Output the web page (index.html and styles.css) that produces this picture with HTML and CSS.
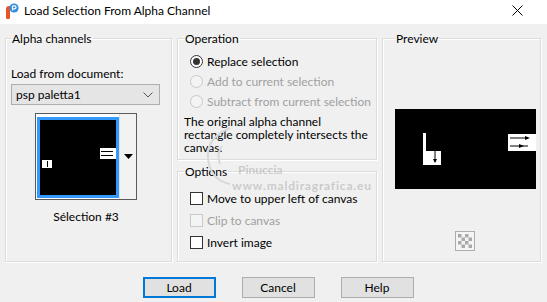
FILE: index.html
```html
<!DOCTYPE html>
<html>

<head>
  <link rel="stylesheet" href="styles.css">
</head>

<body>

  <div class="titlebar">
    <svg class="app-icon" width="14" height="16" viewBox="0 0 14 16">
      <path d="M1 6 Q1 3 4 3 L5 3 L5 15 Q5 16 4 16 L2 16 Q1 16 1 15 Z" fill="#e8542a"/>
      <circle cx="9" cy="5" r="4.6" fill="#2f8fde"/>
      <path d="M7.5 2.8 L7.5 7.6 M7.5 2.8 L9.6 2.8 Q11 2.8 11 4.3 Q11 5.8 9.6 5.8 L7.5 5.8" stroke="#fff" stroke-width="1.2" fill="none"/>
    </svg>
    <span class="title">Load Selection From Alpha Channel</span>
    <svg class="close-icon" width="11" height="11" viewBox="0 0 11 11">
      <path d="M0.5 0.5 L10.5 10.5 M10.5 0.5 L0.5 10.5" stroke="#000" stroke-width="1"/>
    </svg>
  </div>

  <div class="dialog">
    <div class="groups">

      <fieldset class="group alpha">
        <legend>Alpha channels</legend>
        <div class="field-label">Load from document:</div>
        <div class="combo">
          <span>psp paletta1</span>
          <svg width="10" height="6" viewBox="0 0 10 6">
            <path d="M0.5 0.5 L5 5 L9.5 0.5" stroke="#555" stroke-width="1" fill="none"/>
          </svg>
        </div>
        <div class="thumb-picker">
          <div class="thumb">
            <svg width="76" height="75" viewBox="0 0 76 75">
              <rect width="76" height="75" fill="#000"/>
              <rect x="2" y="40" width="10" height="8" fill="#fff"/>
              <rect x="7" y="41" width="1" height="6" fill="#000"/>
              <rect x="60" y="28" width="16" height="11" fill="#fff"/>
              <rect x="61" y="31" width="12" height="1" fill="#000"/>
              <rect x="61" y="35" width="12" height="1" fill="#000"/>
            </svg>
          </div>
          <div class="thumb-drop">
            <svg width="9" height="5" viewBox="0 0 9 5">
              <path d="M0 0 L9 0 L4.5 5 Z" fill="#000"/>
            </svg>
          </div>
        </div>
        <div class="thumb-name">Sélection #3</div>
      </fieldset>

      <div class="middle">
        <fieldset class="group operation">
          <legend>Operation</legend>
          <div class="choice">
            <span class="radio checked"></span>
            <span>Replace selection</span>
          </div>
          <div class="choice disabled">
            <span class="radio"></span>
            <span>Add to current selection</span>
          </div>
          <div class="choice disabled">
            <span class="radio"></span>
            <span>Subtract from current selection</span>
          </div>
          <p class="note">The original alpha channel<br>rectangle completely intersects the<br>canvas.</p>
        </fieldset>

        <fieldset class="group options">
          <legend>Options</legend>
          <div class="choice check-row">
            <span class="checkbox"></span>
            <span>Move to upper left of canvas</span>
          </div>
          <div class="choice check-row disabled">
            <span class="checkbox"></span>
            <span>Clip to canvas</span>
          </div>
          <div class="choice check-row">
            <span class="checkbox"></span>
            <span>Invert image</span>
          </div>
        </fieldset>
      </div>

      <fieldset class="group preview">
        <legend>Preview</legend>
        <svg class="preview-image" width="141" height="80" viewBox="0 0 141 80">
          <rect width="141" height="80" fill="#000"/>
          <rect x="28" y="24" width="3" height="32" fill="#fff"/>
          <rect x="28" y="42" width="18" height="14" fill="#fff"/>
          <path d="M40 42 L40 53" stroke="#000" stroke-width="1"/>
          <path d="M38 50 L40 54 L42 50 Z" fill="#000"/>
          <rect x="113" y="25" width="28" height="17" fill="#fff"/>
          <path d="M115 29 L133 29 M115 37 L133 37" stroke="#000" stroke-width="1"/>
          <path d="M130 27 L135 29 L130 31 Z M124 35 L129 37 L124 39 Z" fill="#000"/>
        </svg>
        <svg class="checker" width="20" height="20" viewBox="0 0 20 20">
          <rect x="0.5" y="0.5" width="19" height="19" fill="#f4f4f4" stroke="#adadad"/>
          <g fill="#a9a9a9">
            <rect x="3" y="3" width="3.5" height="3.5"/>
            <rect x="10" y="3" width="3.5" height="3.5"/>
            <rect x="6.5" y="6.5" width="3.5" height="3.5"/>
            <rect x="13.5" y="6.5" width="3.5" height="3.5"/>
            <rect x="3" y="10" width="3.5" height="3.5"/>
            <rect x="10" y="10" width="3.5" height="3.5"/>
            <rect x="6.5" y="13.5" width="3.5" height="3.5"/>
            <rect x="13.5" y="13.5" width="3.5" height="3.5"/>
          </g>
        </svg>
      </fieldset>

    </div>

    <div class="buttons">
      <button class="btn default">Load</button>
      <button class="btn">Cancel</button>
      <button class="btn">Help</button>
    </div>

    <!-- watermark printed over the screenshot -->
    <svg class="wm-ring" width="40" height="64" viewBox="0 0 40 64">
      <path d="M30 4 Q6 14 8 34 Q10 56 30 60" stroke="#d8d8d8" stroke-width="2" fill="none"/>
      <path d="M22 22 Q16 30 20 40" stroke="#d8d8d8" stroke-width="2" fill="none"/>
    </svg>
    <span class="wm-name">Pinuccia</span>
    <span class="wm-site">www.maldiragrafica.eu</span>
  </div>

</body>

</html>
```

FILE: styles.css
```css
* {
  box-sizing: border-box;
}

body {
  margin: 0;
  width: 547px;
  height: 302px;
  overflow: hidden;
  background-color: #f0f0f0;
  font-family: Lato, "Noto Sans", sans-serif;
  font-size: 12px;
  color: #000;
}

.titlebar {
  display: flex;
  align-items: center;
  height: 24px;
  padding: 0 0 4px 5px;
  background-color: #fff;
}

.app-icon {
  margin-top: 2px;
}

.title {
  margin-left: 5px;
  flex: 1;
}

.close-icon {
  margin-right: 24px;
  margin-top: 1px;
}

.dialog {
  position: relative;
  padding: 7px 0 0 5px;
}

.groups {
  display: grid;
  grid-template-columns: 167px 200px 159px;
  column-gap: 5px;
  height: 231px;
}

.group {
  margin: 0;
  min-width: 0;
  border: 1px solid #dcdcdc;
  box-shadow: inset 1px 1px 0 #fff, 1px 1px 0 #fff;
  padding: 0 5px;
}

.group legend {
  margin-left: 0;
  padding: 0 1px;
  line-height: 15px;
}

/* Alpha channels */
.field-label {
  margin-top: 20px;
  line-height: 15px;
}

.combo {
  display: flex;
  align-items: center;
  justify-content: space-between;
  width: 149px;
  height: 21px;
  margin-top: 3px;
  padding: 0 6px 0 4px;
  background-color: #e5e5e5;
  border: 1px solid #adadad;
}

.thumb-picker {
  display: flex;
  width: 102px;
  height: 87px;
  margin: 8px 0 0 24px;
  padding: 3px 0 1px 1px;
  border: 1px solid #5a5a5a;
  background-color: #fff;
}

.thumb {
  width: 82px;
  height: 81px;
  border: 3px solid #3399ff;
  line-height: 0;
}

.thumb-drop {
  flex: 1;
  display: flex;
  align-items: center;
  justify-content: center;
  margin-top: -3px;
  margin-bottom: -1px;
  background-color: #f2f2f2;
  border-left: 1px solid #e0e0e0;
}

.thumb-name {
  width: 102px;
  margin: 9px 0 0 24px;
  text-align: center;
  line-height: 15px;
}

/* Operation / Options */
.middle {
  display: flex;
  flex-direction: column;
  gap: 4px;
}

.operation {
  height: 129px;
  padding: 5px 6px 0 6px;
}

.options {
  flex: 1;
  padding: 8px 6px 0 6px;
}

.choice {
  display: flex;
  align-items: center;
  height: 20px;
  padding-left: 6px;
  gap: 4px;
  white-space: nowrap;
}

.check-row {
  height: 22px;
}

.disabled {
  color: #a0a0a0;
}

.radio {
  flex-shrink: 0;
  width: 13px;
  height: 13px;
  border-radius: 50%;
  border: 1px solid #333;
  background-color: #fff;
  display: flex;
  align-items: center;
  justify-content: center;
}

.radio.checked::after {
  content: "";
  width: 7px;
  height: 7px;
  border-radius: 50%;
  background-color: #333;
}

.disabled .radio {
  border-color: #c8c8c8;
  background-color: #f4f4f4;
}

.checkbox {
  flex-shrink: 0;
  width: 13px;
  height: 13px;
  border: 1px solid #333;
  background-color: #fff;
}

.disabled .checkbox {
  border-color: #c8c8c8;
  background-color: #f4f4f4;
}

.note {
  margin: 4px 0 0 0;
  line-height: 13px;
  white-space: nowrap;
}

/* Preview */
.preview {
  padding: 0 0 0 12px;
}

.preview-image {
  display: block;
  margin-top: 63px;
}

.checker {
  display: block;
  margin: 42px 0 0 60px;
}

/* Buttons */
.buttons {
  display: flex;
  justify-content: center;
  gap: 26px;
  margin-top: 15px;
  padding-left: 4px;
}

.btn {
  width: 73px;
  height: 21px;
  padding: 0;
  font-family: inherit;
  font-size: 12px;
  color: #000;
  background-color: #e1e1e1;
  border: 1px solid #adadad;
}

.btn.default {
  border: 2px solid #0078d7;
}

/* Watermark */
.wm-ring {
  position: absolute;
  left: 200px;
  top: 100px;
  pointer-events: none;
}

.wm-name,
.wm-site {
  position: absolute;
  font-weight: bold;
  font-size: 12px;
  line-height: 12px;
  color: rgba(170, 170, 170, 0.55);
  pointer-events: none;
}

.wm-name {
  left: 238px;
  top: 140px;
}

.wm-site {
  left: 232px;
  top: 156px;
  letter-spacing: 0.8px;
}
```
